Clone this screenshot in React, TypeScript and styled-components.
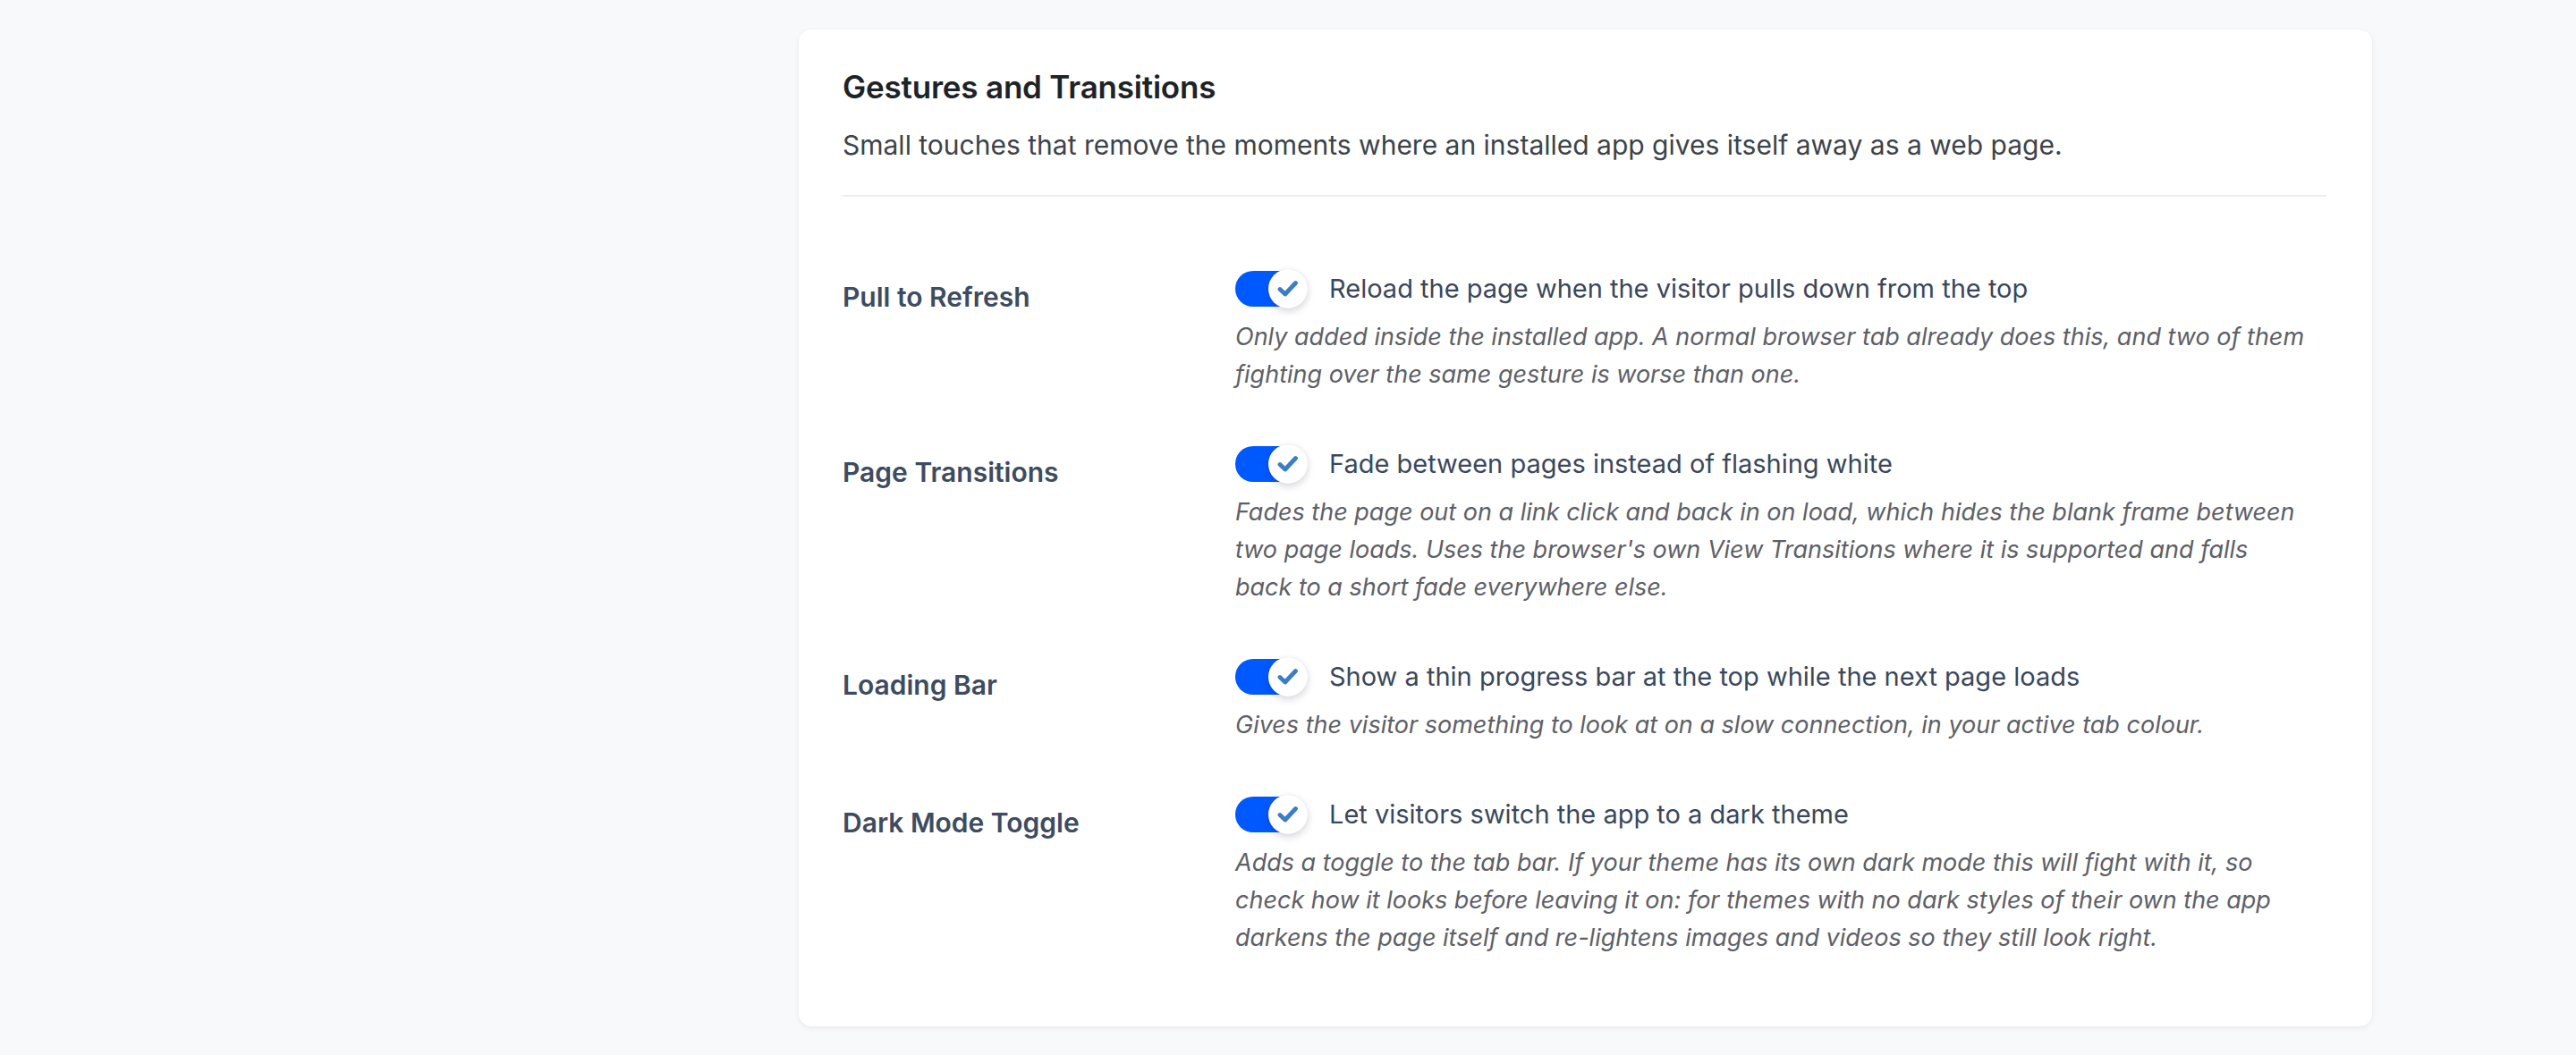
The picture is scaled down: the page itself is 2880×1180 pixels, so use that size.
import React from "react";
import styled, { createGlobalStyle } from "styled-components";

const GlobalStyle = createGlobalStyle`
  html, body {
    margin: 0;
    padding: 0;
    background: #f8f9fb;
  }
  body {
    font-family: Inter, "Noto Sans", "Liberation Sans", sans-serif;
    -webkit-font-smoothing: antialiased;
  }
`;

const Page = styled.div`
  min-height: 1180px;
  box-sizing: border-box;
  padding: 33px 0 0 893px;
`;

const Card = styled.section`
  width: 1759px;
  box-sizing: border-box;
  background: #ffffff;
  border-radius: 14px;
  box-shadow: 0 2px 6px rgba(15, 23, 42, 0.06), 0 0 1px rgba(15, 23, 42, 0.06);
  padding: 41px 51px 50px 49px;
`;

const Title = styled.h2`
  margin: 0;
  font-size: 35px;
  line-height: 46px;
  font-weight: 600;
  color: #1d2327;
  letter-spacing: -0.2px;
`;

const Lead = styled.p`
  margin: 21px 0 0;
  font-size: 30px;
  line-height: 42px;
  color: #3c434a;
`;

const Divider = styled.hr`
  margin: 35px 0 0;
  border: 0;
  height: 2px;
  background: #eceef1;
`;

const Rows = styled.div`
  margin-top: 52px;
  display: flex;
  flex-direction: column;
`;

const Row = styled.div`
  display: grid;
  grid-template-columns: 439px 1fr;
  padding: 29px 0 28px;
`;

const Label = styled.div`
  padding-top: 10px;
  font-size: 30px;
  line-height: 42px;
  font-weight: 600;
  color: #3e4b60;
`;

const Field = styled.div`
  display: flex;
  flex-direction: column;
`;

const ControlLine = styled.label`
  display: flex;
  align-items: center;
  gap: 29px;
  height: 44px;
  cursor: pointer;
`;

const Track = styled.span<{ $on: boolean }>`
  position: relative;
  flex: none;
  width: 76px;
  height: 40px;
  border-radius: 20px;
  background: ${(p) => (p.$on ? "#0059ff" : "#c3c8d0")};
`;

const Knob = styled.span<{ $on: boolean }>`
  position: absolute;
  top: -2px;
  left: ${(p) => (p.$on ? "37px" : "-2px")};
  width: 44px;
  height: 44px;
  border-radius: 50%;
  background: #ffffff;
  box-shadow: 0 3px 8px rgba(15, 23, 42, 0.18), 0 0 1px rgba(15, 23, 42, 0.1);
  display: flex;
  align-items: center;
  justify-content: center;
`;

const ControlText = styled.span`
  font-size: 29px;
  line-height: 42px;
  color: #3a475c;
`;

const Help = styled.p`
  margin: 11px 0 0;
  font-size: 27px;
  line-height: 42px;
  font-style: italic;
  color: #5d6067;
`;

const Check = () => (
  <svg width="24" height="20" viewBox="0 0 24 20" fill="none">
    <path
      d="M3 10.5 L8.8 16 L20.5 3.5"
      stroke="#3b7ec3"
      strokeWidth="4.8"
      strokeLinecap="round"
      strokeLinejoin="round"
    />
  </svg>
);

type Setting = {
  label: string;
  control: string;
  help: string[];
};

const settings: Setting[] = [
  {
    label: "Pull to Refresh",
    control: "Reload the page when the visitor pulls down from the top",
    help: [
      "Only added inside the installed app. A normal browser tab already does this, and two of them",
      "fighting over the same gesture is worse than one.",
    ],
  },
  {
    label: "Page Transitions",
    control: "Fade between pages instead of flashing white",
    help: [
      "Fades the page out on a link click and back in on load, which hides the blank frame between",
      "two page loads. Uses the browser's own View Transitions where it is supported and falls",
      "back to a short fade everywhere else.",
    ],
  },
  {
    label: "Loading Bar",
    control: "Show a thin progress bar at the top while the next page loads",
    help: [
      "Gives the visitor something to look at on a slow connection, in your active tab colour.",
    ],
  },
  {
    label: "Dark Mode Toggle",
    control: "Let visitors switch the app to a dark theme",
    help: [
      "Adds a toggle to the tab bar. If your theme has its own dark mode this will fight with it, so",
      "check how it looks before leaving it on: for themes with no dark styles of their own the app",
      "darkens the page itself and re-lightens images and videos so they still look right.",
    ],
  },
];

const Toggle = ({ on }: { on: boolean }) => (
  <Track $on={on} role="switch" aria-checked={on}>
    <Knob $on={on}>{on && <Check />}</Knob>
  </Track>
);

export default function App() {
  return (
    <>
      <GlobalStyle />
      <Page>
        <Card>
          <Title>Gestures and Transitions</Title>
          <Lead>
            Small touches that remove the moments where an installed app gives itself away as a web page.
          </Lead>
          <Divider />
          <Rows>
            {settings.map((s) => (
              <Row key={s.label}>
                <Label>{s.label}</Label>
                <Field>
                  <ControlLine>
                    <Toggle on />
                    <ControlText>{s.control}</ControlText>
                  </ControlLine>
                  <Help>
                    {s.help.map((line, i) => (
                      <React.Fragment key={i}>
                        {i > 0 && <br />}
                        {line}
                      </React.Fragment>
                    ))}
                  </Help>
                </Field>
              </Row>
            ))}
          </Rows>
        </Card>
      </Page>
    </>
  );
}
